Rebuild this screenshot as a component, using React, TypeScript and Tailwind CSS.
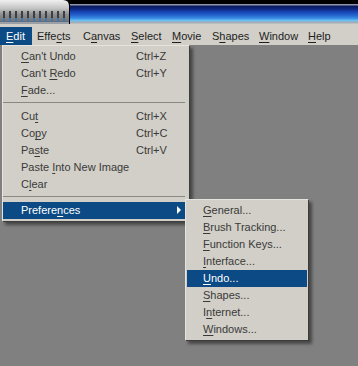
import React from "react";

type Item = { pre: string; key: string; post: string; shortcut?: string };

const menuBar = [
  { pre: "", key: "E", post: "dit", w: "w-[32px] pl-[6px]", active: true },
  { pre: "Effe", key: "c", post: "ts", w: "w-[46px] pl-[5px]" },
  { pre: "C", key: "a", post: "nvas", w: "w-[48px] pl-[5px]" },
  { pre: "", key: "S", post: "elect", w: "w-[41px] pl-[5px]" },
  { pre: "", key: "M", post: "ovie", w: "w-[40px] pl-[5px]" },
  { pre: "S", key: "h", post: "apes", w: "w-[47px] pl-[5px]" },
  { pre: "", key: "W", post: "indow", w: "w-[49px] pl-[5px]" },
  { pre: "", key: "H", post: "elp", w: "w-[30px] pl-[5px]" },
];

const group1: Item[] = [
  { pre: "", key: "C", post: "an't Undo", shortcut: "Ctrl+Z" },
  { pre: "Can't ", key: "R", post: "edo", shortcut: "Ctrl+Y" },
  { pre: "", key: "F", post: "ade...", },
];

const group2: Item[] = [
  { pre: "Cu", key: "t", post: "", shortcut: "Ctrl+X" },
  { pre: "Co", key: "p", post: "y", shortcut: "Ctrl+C" },
  { pre: "Pa", key: "s", post: "te", shortcut: "Ctrl+V" },
  { pre: "Paste ", key: "I", post: "nto New Image" },
  { pre: "C", key: "l", post: "ear" },
];

const prefs: Item[] = [
  { pre: "", key: "G", post: "eneral..." },
  { pre: "", key: "B", post: "rush Tracking..." },
  { pre: "", key: "F", post: "unction Keys..." },
  { pre: "", key: "I", post: "nterface..." },
  { pre: "", key: "U", post: "ndo..." },
  { pre: "", key: "S", post: "hapes..." },
  { pre: "I", key: "n", post: "ternet..." },
  { pre: "", key: "W", post: "indows..." },
];

const Label = ({ pre, k, post }: { pre: string; k: string; post: string }) => (
  <span className="whitespace-pre">
    {pre}
    <span className="underline underline-offset-[2px]">{k}</span>
    {post}
  </span>
);

const Separator = () => (
  <div className="h-[9px] pt-[3px] pl-0 pr-[4px]">
    <div className="h-px bg-[#8a8884]" />
  </div>
);

const TopTab = () => (
  <svg width="70" height="24" viewBox="0 0 70 24" className="block shrink-0">
    <defs>
      <linearGradient id="tabg" x1="0" y1="0" x2="0" y2="1">
        <stop offset="0" stopColor="#f0f0f0" />
        <stop offset="0.35" stopColor="#c4c4c4" />
        <stop offset="0.6" stopColor="#8e8e8e" />
        <stop offset="1" stopColor="#6a6a6a" />
      </linearGradient>
    </defs>
    <path d="M0 0 H63 Q69 0 69 6 V24 H0 Z" fill="url(#tabg)" />
    {Array.from({ length: 11 }).map((_, i) => (
      <g key={i}>
        <rect x={3 + i * 6} y={11} width={2} height={10} fill="#3a3e44" />
        <rect x={3 + i * 6} y={18} width={2} height={3} fill="#3a78b8" />
      </g>
    ))}
    <rect x="0" y="21" width="69" height="1" fill="#5a6f8a" />
    <rect x="0" y="22" width="69" height="2" fill="#9aa0a6" />
  </svg>
);

export default function App() {
  return (
    <div className="relative w-[358px] h-[366px] overflow-hidden bg-[#808080] font-['Liberation_Sans',Arial,sans-serif] text-[11px] leading-none">
      {/* title chrome */}
      <div className="flex h-[24px] bg-black">
        <TopTab />
        <div className="flex-1 mt-[4px] h-[20px] bg-[linear-gradient(to_bottom,#8d96ab_0px,#8d96ab_1px,#0a1658_2px,#0d2680_5px,#1846b4_8px,#2461cc_11px,#3688e0_14px,#5ab4f0_16px,#7ccaf4_17px,#9aa2aa_18px,#c4c8cc_20px)]" />
      </div>

      {/* menu bar */}
      <div className="flex items-end h-[21px] bg-[#d1cfc7] text-[#1e1e1e]">
        {menuBar.map((m) => (
          <div
            key={m.key + m.post}
            className={`${m.w} h-[18px] flex items-center shrink-0 ${
              m.active ? "bg-[#0b4a84] text-white" : ""
            }`}
          >
            <Label pre={m.pre} k={m.key} post={m.post} />
          </div>
        ))}
      </div>

      {/* Edit menu */}
      <div className="absolute left-[2px] top-[45px] w-[188px] bg-[#d1cfc7] text-[#3a3a3a] border-l border-t border-l-[#e6e4de] border-t-[#e6e4de] border-r border-b border-r-[#3c3c3c] border-b-[#3c3c3c] pt-[2px] pb-[2px] shadow-[3px_3px_3px_rgba(0,0,0,0.45)]">
        {group1.map((it) => (
          <div key={it.post} className="flex items-center h-[17px] mr-[3px] pl-[18px]">
            <div className="w-[115px]">
              <Label pre={it.pre} k={it.key} post={it.post} />
            </div>
            <span>{it.shortcut}</span>
          </div>
        ))}
        <Separator />
        {group2.map((it) => (
          <div key={it.post + it.pre} className="flex items-center h-[17px] mr-[3px] pl-[18px]">
            <div className="w-[115px]">
              <Label pre={it.pre} k={it.key} post={it.post} />
            </div>
            <span>{it.shortcut}</span>
          </div>
        ))}
        <Separator />
        <div className="relative flex items-center h-[17px] mr-[3px] pl-[18px] bg-[#0b4a84] text-white">
          <Label pre="Prefere" k="n" post="ces" />
          <span className="absolute right-[5px] top-[4px] w-0 h-0 border-y-[4px] border-y-transparent border-l-[4px] border-l-white" />
        </div>
      </div>

      {/* Preferences submenu */}
      <div className="absolute left-[185px] top-[199px] w-[124px] bg-[#d1cfc7] text-[#3a3a3a] border-l border-t border-l-[#e6e4de] border-t-[#e6e4de] border-r border-b border-r-[#3c3c3c] border-b-[#3c3c3c] pt-[2px] pb-[2px] px-px shadow-[3px_3px_3px_rgba(0,0,0,0.45)]">
        {prefs.map((it) => (
          <div
            key={it.post}
            className={`flex items-center h-[17px] pl-[16px] ${
              it.key === "U" ? "bg-[#0b4a84] text-white" : ""
            }`}
          >
            <Label pre={it.pre} k={it.key} post={it.post} />
          </div>
        ))}
      </div>
    </div>
  );
}
